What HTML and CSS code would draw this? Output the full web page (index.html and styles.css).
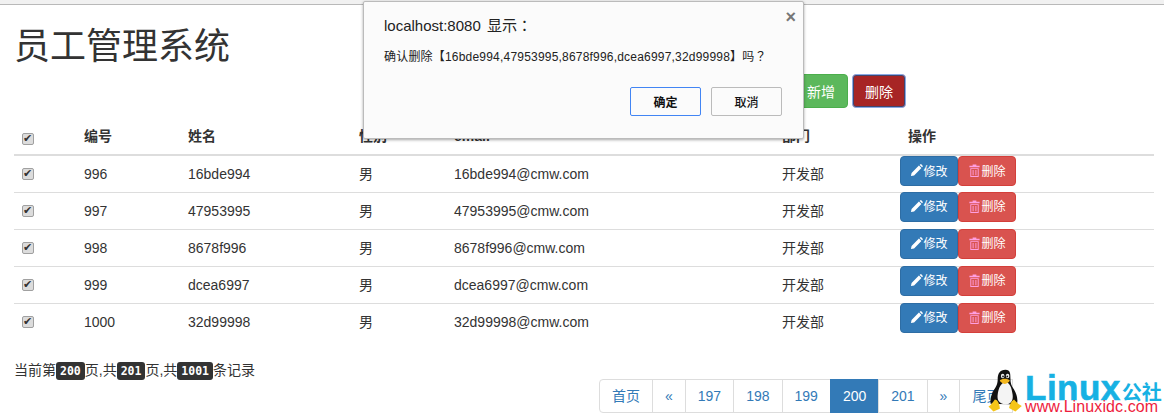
FILE: index.html
```html
<!DOCTYPE html>
<html lang="zh">
<head>
<meta charset="utf-8">
<title>员工管理系统</title>
<link rel="stylesheet" href="styles.css">
</head>
<body>
<svg width="0" height="0" class="defs">
  <symbol id="pencil" viewBox="0 0 14 14"><path d="M1 13l.7-3.400L9.600 1.700l2.700 2.700-7.900 7.900L1 13zM10.400 1l.6-.6c.4-.3.9-.3 1.200 0l1.400 1.400c.3.3.3.8 0 1.200l-.6.6L10.400 1z" fill="currentColor"/></symbol>
  <symbol id="trash" viewBox="0 0 12 14"><path d="M4 .5h4v1.500h3.500v1.500H.5V2H4V.5zM1.500 4.500h9V14h-9V4.500zm1 1v7.500h7V5.500h-7zM4 6.500h1v5.500H4V6.500zm3 0h1v5.500H7V6.500z" fill="currentColor" fill-rule="evenodd"/></symbol>
</svg>
<div class="topbar"></div>
<main class="page">
  <h1 class="title">员工管理系统</h1>
  <div class="actions">
    <button class="btn btn-green">新增</button>
    <button class="btn btn-darkred">删除</button>
  </div>
  <table class="grid">
    <colgroup>
      <col class="c1"><col class="c2"><col class="c3"><col class="c4"><col class="c5"><col class="c6"><col>
    </colgroup>
    <thead>
      <tr><th><input type="checkbox" checked></th><th>编号</th><th>姓名</th><th>性别</th><th>email</th><th>部门</th><th>操作</th></tr>
    </thead>
    <tbody>
      <tr><td><input type="checkbox" checked></td><td>996</td><td>16bde994</td><td>男</td><td>16bde994@cmw.com</td><td>开发部</td><td class="ops"><button class="btn btn-sm btn-blue"><svg class="ico"><use href="#pencil"/></svg>修改</button><button class="btn btn-sm btn-red"><svg class="ico ico-pink"><use href="#trash"/></svg>删除</button></td></tr>
      <tr><td><input type="checkbox" checked></td><td>997</td><td>47953995</td><td>男</td><td>47953995@cmw.com</td><td>开发部</td><td class="ops"><button class="btn btn-sm btn-blue"><svg class="ico"><use href="#pencil"/></svg>修改</button><button class="btn btn-sm btn-red"><svg class="ico ico-pink"><use href="#trash"/></svg>删除</button></td></tr>
      <tr><td><input type="checkbox" checked></td><td>998</td><td>8678f996</td><td>男</td><td>8678f996@cmw.com</td><td>开发部</td><td class="ops"><button class="btn btn-sm btn-blue"><svg class="ico"><use href="#pencil"/></svg>修改</button><button class="btn btn-sm btn-red"><svg class="ico ico-pink"><use href="#trash"/></svg>删除</button></td></tr>
      <tr><td><input type="checkbox" checked></td><td>999</td><td>dcea6997</td><td>男</td><td>dcea6997@cmw.com</td><td>开发部</td><td class="ops"><button class="btn btn-sm btn-blue"><svg class="ico"><use href="#pencil"/></svg>修改</button><button class="btn btn-sm btn-red"><svg class="ico ico-pink"><use href="#trash"/></svg>删除</button></td></tr>
      <tr><td><input type="checkbox" checked></td><td>1000</td><td>32d99998</td><td>男</td><td>32d99998@cmw.com</td><td>开发部</td><td class="ops"><button class="btn btn-sm btn-blue"><svg class="ico"><use href="#pencil"/></svg>修改</button><button class="btn btn-sm btn-red"><svg class="ico ico-pink"><use href="#trash"/></svg>删除</button></td></tr>
    </tbody>
  </table>
  <div class="foot">
    <p class="info">当前第<code>200</code>页,共<code>201</code>页,共<code>1001</code>条记录</p>
    <nav class="pager">
      <a>首页</a><a>«</a><a>197</a><a>198</a><a>199</a><a class="on">200</a><a>201</a><a>»</a><a>尾页</a>
    </nav>
  </div>
</main>

<div class="dialog" lang="zh-TW">
  <span class="close">×</span>
  <div class="d-title">localhost:8080 显示：</div>
  <div class="d-msg">确认删除【16bde994,47953995,8678f996,dcea6997,32d99998】吗？</div>
  <div class="d-btns">
    <button class="d-btn d-primary">确定</button>
    <button class="d-btn">取消</button>
  </div>
</div>

<div class="mark">
  <svg class="tux" width="37" height="44" viewBox="0 0 52 62">
    <path d="M26 1c-8 0-11 6-11 13 0 6-1 9-5 15-4 7-6 13-5 20l37 1c2-7 0-14-4-21-4-6-5-9-5-15C33 7 33 1 26 1z" fill="#111"/>
    <path d="M26 18c-6 1-10 9-11 18-1 7 1 13 11 14 9 0 11-7 10-14-1-9-4-17-10-18z" fill="#f4f4f4"/>
    <ellipse cx="22" cy="10" rx="2.500" ry="3.200" fill="#eee"/>
    <ellipse cx="29" cy="10" rx="2.500" ry="3.200" fill="#eee"/>
    <circle cx="22.500" cy="10.500" r="1.200" fill="#111"/>
    <circle cx="28.500" cy="10.500" r="1.200" fill="#111"/>
    <path d="M18 16c3-3 11-3 14 0 0 2-4 5-7 5s-7-3-7-5z" fill="#f3b61c"/>
    <path d="M11 43c4 0 7 7 7 13l-9 4-7-7c3-1 6-6 9-10zM38 43c3 3 6 7 11 9l-9 8-9-5c1-5 3-10 7-12z" fill="#f5c518"/>
  </svg>
  <div class="brand">
    <div class="brand-top"><span class="linux">Linux</span><span class="gs">公社</span></div>
    <div class="url">www.Linuxidc.com</div>
  </div>
</div>
</body>
</html>
```
FILE: styles.css
```css
* { box-sizing: border-box; }
html, body { margin: 0; height: 417px; overflow: hidden; background: #fff; }
body {
  font-family: "Liberation Sans", "Noto Sans CJK SC", sans-serif;
  font-size: 14px;
  line-height: 20px;
  color: #333;
  position: relative;
}
.defs { position: absolute; }
.topbar { height: 5px; background: #f1f1f1; border-bottom: 1px solid #b9b9b9; }
.page { padding: 0 10px 0 14px; }
.title {
  margin: 0;
  padding-top: 13px;
  font-size: 36px;
  line-height: 50px;
  font-weight: 400;
  font-family: "Noto Sans CJK SC", sans-serif;
  color: #333;
}
.actions {
  display: flex;
  justify-content: flex-end;
  gap: 4px;
  margin-top: 6px;
  padding-right: 248px;
}
.btn {
  display: inline-flex;
  align-items: center;
  justify-content: center;
  font: inherit;
  font-family: "Noto Sans CJK SC", sans-serif;
  color: #fff;
  border: 1px solid transparent;
  border-radius: 4px;
  height: 34px;
  padding: 0 12px;
}
.btn-green { background: #5cb85c; border-color: #4cae4c; }
.btn-darkred { background: #a72525; border-color: #8aa9e6; box-shadow: 0 0 0 1px #41476f inset; }
.grid {
  width: 1140px;
  border-collapse: collapse;
  table-layout: fixed;
  margin-top: 10px;
}
.c1 { width: 62px; } .c2 { width: 104px; } .c3 { width: 171px; }
.c4 { width: 95px; } .c5 { width: 328px; } .c6 { width: 126px; }
.grid th, .grid td { padding: 0 8px; text-align: left; vertical-align: middle; }
.grid th { height: 37px; font-weight: 700; border-bottom: 2px solid #ddd; }
.grid td { height: 37px; border-bottom: 1px solid #ddd; }
.grid tr:last-child td { border-bottom: 0; }
.grid input {
  appearance: none;
  -webkit-appearance: none;
  position: relative;
  display: block;
  width: 12px;
  height: 12px;
  margin: 0;
  background: #dcdcdc;
  border: 1px solid #a0a0a0;
  border-radius: 2px;
}
.grid input::after {
  content: "✔";
  position: absolute;
  left: 0;
  top: -5px;
  font: 11px/20px "DejaVu Sans", sans-serif;
  color: #333;
}
.grid th input { margin-top: 6px; }
.grid td.ops { padding: 0; vertical-align: top; }
.btn-sm { height: 30px; width: 58px; padding: 0 0 1px; font-size: 12px; vertical-align: top; white-space: nowrap; }
tbody tr + tr .btn-sm { margin-top: -1px; }
.btn-blue { background: #337ab7; border-color: #2e6da4; }
.btn-red { background: #d9534f; border-color: #d43f3a; }
.ico { width: 13px; height: 13px; margin-right: 0; color: #fff; }
.ico-pink { color: #ff9ee0; }
.foot { position: relative; height: 56px; margin-top: 9px; }
.info { margin: 0; padding-top: 11px; }
.info code {
  font-family: "DejaVu Sans Mono", monospace;
  font-size: 11.500px;
  font-weight: 700;
  background: #333;
  color: #fff;
  border-radius: 3px;
  padding: 2px 4px;
}
.pager {
  position: absolute;
  left: 585px;
  top: 30px;
  display: flex;
}
.pager a {
  height: 34px;
  padding: 6px 12px;
  color: #337ab7;
  border: 1px solid #ddd;
  margin-left: -1px;
  background: #fff;
  white-space: nowrap;
}
.pager a:first-child { margin-left: 0; border-radius: 4px 0 0 4px; }
.pager a.on { background: #337ab7; border-color: #337ab7; color: #fff; }

.dialog {
  position: absolute;
  left: 363px;
  top: 1px;
  width: 441px;
  height: 138px;
  background: #fbfbfb;
  border: 1px solid #bbb;
  border-radius: 2px;
  box-shadow: 0 1px 3px rgba(0,0,0,.35);
  padding: 13px 21px 13px 20px;
  font-family: "Liberation Sans", "Noto Sans CJK TC", sans-serif;
  color: #222;
}
.close { position: absolute; right: 7px; top: 3px; font: 700 18px/24px "Liberation Sans", sans-serif; color: #777; }
.d-title { font-size: 15px; line-height: 22px; word-spacing: 2px; }
.d-msg { margin-top: 10px; font-size: 12px; line-height: 20px; white-space: nowrap; letter-spacing: .2px; }
.d-btns { display: flex; justify-content: flex-end; gap: 10px; margin-top: 20px; }
.d-btn {
  width: 71px; height: 29px; padding: 0;
  font: 500 12px "Noto Sans CJK SC", sans-serif;
  background: #fbfbfb; border: 1px solid #bbb; border-radius: 2px; color: #111;
}
.d-primary { border-color: #4285f4; font-weight: 700; }

.mark {
  position: absolute;
  left: 987px;
  top: 369px;
  display: flex;
  align-items: flex-start;
}
.tux { display: block; flex: none; }
.brand { flex: none; margin-left: 1px; font-family: "Liberation Sans", sans-serif; }
.brand-top { display: flex; align-items: flex-end; height: 34px; }
.linux { font-size: 35px; line-height: 31px; font-weight: 700; color: #17b1e3; letter-spacing: .5px; -webkit-text-stroke: .6px #17b1e3; }
.gs { font: 700 20px/22px "Noto Sans CJK SC", sans-serif; color: #17b1e3; margin-left: 1px; }
.url { margin-top: -3px; font-size: 16px; line-height: 14px; color: #ee1c3d; white-space: nowrap; letter-spacing: .1px; }
```
